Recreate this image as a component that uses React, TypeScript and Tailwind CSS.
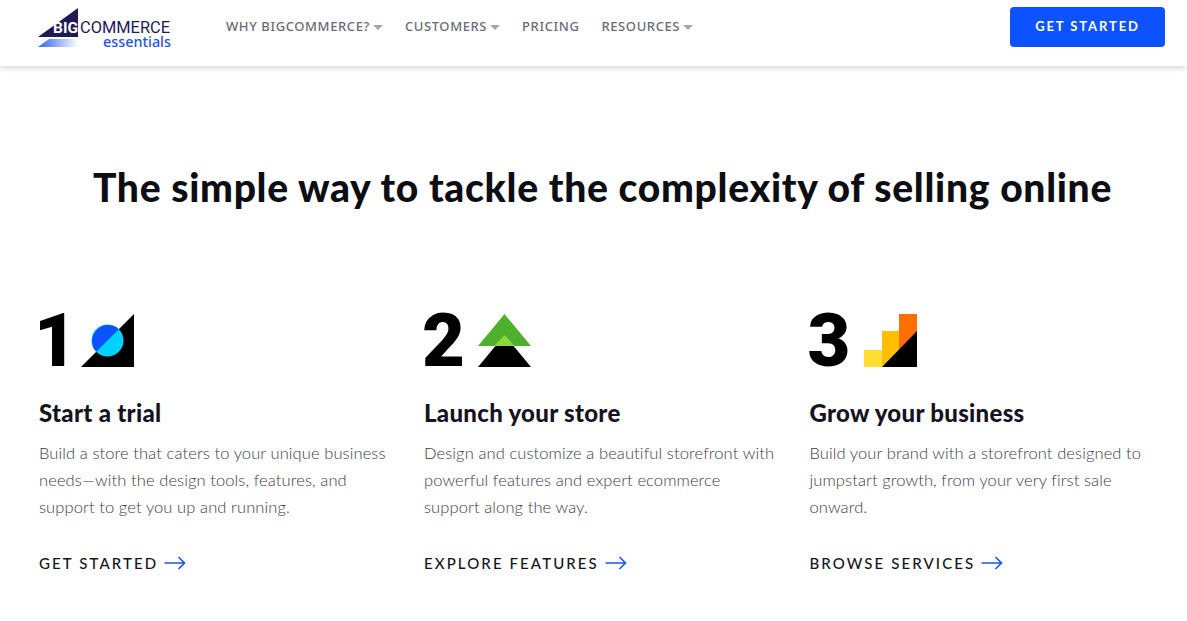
const NAV = [
  { label: "WHY BIGCOMMERCE?", caret: true },
  { label: "CUSTOMERS", caret: true },
  { label: "PRICING", caret: false },
  { label: "RESOURCES", caret: true },
];

function Logo() {
  return (
    <svg width="136" height="42" viewBox="0 0 136 42" className="block">
      <defs>
        <linearGradient id="logoFade" x1="0" x2="1" y1="0" y2="0">
          <stop offset="0" stopColor="#2f62ff" />
          <stop offset="1" stopColor="#ffffff" />
        </linearGradient>
      </defs>
      <path d="M1 29 L41 0 V29 Z" fill="#1f1a55" />
      <path d="M1 39 L12 31 H41 V39 Z" fill="url(#logoFade)" />
      <text x="16" y="25" fontFamily="Roboto, sans-serif" fontWeight="700" fontSize="15.5" fill="#ffffff">BIG</text>
      <text x="43" y="25" fontFamily="Roboto, sans-serif" fontWeight="400" fontSize="16.4" fill="#1f1a55">COMMERCE</text>
      <text x="134" y="39" textAnchor="end" fontFamily="'Noto Sans', sans-serif" fontWeight="500" fontSize="14.4" fill="#1f55e8">essentials</text>
    </svg>
  );
}

function Caret() {
  return <span className="ml-[3px] mt-[1px] h-0 w-0 border-x-[5px] border-t-[5px] border-x-transparent border-t-[#a5a5ad]" />;
}

function Arrow() {
  return (
    <svg width="22" height="14" viewBox="0 0 22 14" fill="none" stroke="#1a56f0" strokeWidth="1.6" className="ml-[6px]">
      <path d="M0.5 7 H20.5 M14.5 1 L20.5 7 L14.5 13" />
    </svg>
  );
}

function IconOne() {
  return (
    <svg width="54" height="54" viewBox="0 0 54 54">
      <path d="M0 53 L53 0 V53 Z" fill="#000000" />
      <circle cx="26.5" cy="26.5" r="16" fill="#00d2ff" />
      <path d="M15.2 37.8 A16 16 0 0 1 37.8 15.2 Z" fill="#0d52ff" />
    </svg>
  );
}

function IconTwo() {
  return (
    <svg width="54" height="54" viewBox="0 0 54 54">
      <path d="M0 53 L26.5 21 L53 53 Z" fill="#000000" />
      <path d="M0 32 L26.5 0 L53 32 Z" fill="#4fb02d" />
      <path d="M16 32 L26.5 21 L37 32 Z" fill="#8bd93d" />
    </svg>
  );
}

function IconThree() {
  return (
    <svg width="54" height="54" viewBox="0 0 54 54">
      <rect x="0" y="36" width="18" height="17" fill="#ffdf33" />
      <rect x="18" y="17" width="18" height="36" fill="#ffbe00" />
      <rect x="35" y="0" width="18" height="53" fill="#ff6f00" />
      <path d="M18 53 L53 17 V53 Z" fill="#000000" />
    </svg>
  );
}

const STEPS = [
  {
    num: "1",
    numClass: "w-[47px] -ml-[5px]",
    icon: <IconOne />,
    title: "Start a trial",
    body: ["Build a store that caters to your unique business", "needs—with the design tools, features, and", "support to get you up and running."],
    link: "GET STARTED",
  },
  {
    num: "2",
    numClass: "w-[56px] -ml-[2px]",
    icon: <IconTwo />,
    title: "Launch your store",
    body: ["Design and customize a beautiful storefront with", "powerful features and expert ecommerce", "support along the way."],
    link: "EXPLORE FEATURES",
  },
  {
    num: "3",
    numClass: "w-[56px] -ml-[2px]",
    icon: <IconThree />,
    title: "Grow your business",
    body: ["Build your brand with a storefront designed to", "jumpstart growth, from your very first sale", "onward."],
    link: "BROWSE SERVICES",
  },
];

export default function App() {
  return (
    <div className="h-[621px] w-[1187px] overflow-hidden bg-white font-['Lato',sans-serif]">
      <header className="flex h-[66px] items-start justify-between pl-[37px] pr-[22px] pt-[7px] shadow-[0_2px_6px_rgba(0,0,0,0.16)]">
        <div className="flex items-start">
          <div className="pt-[1px]">
            <Logo />
          </div>
          <nav className="ml-[53px] flex h-10 items-center gap-[22px] font-['Noto_Sans',sans-serif] text-[13px] font-medium tracking-[0.6px] text-[#6b6b76]">
            {NAV.map((item) => (
              <span key={item.label} className="flex items-center">
                {item.label}
                {item.caret && <Caret />}
              </span>
            ))}
          </nav>
        </div>
        <button type="button" className="h-10 w-[155px] rounded bg-[#0d52ff] text-[13px] font-bold tracking-[1.9px] text-white">
          GET STARTED
        </button>
      </header>

      <h1 className="mt-[97px] pl-[18px] text-center text-[39px] font-black leading-[48px] tracking-[0.7px] text-[#0d0d14]">
        The simple way to tackle the complexity of selling online
      </h1>

      <div className="mt-[103px] grid grid-cols-[385px_385.5px_1fr] pl-[39px]">
        {STEPS.map((step) => (
          <section key={step.num}>
            <div className="flex h-[54px] items-start">
              <span className={`${step.numClass} font-['Roboto',sans-serif] text-[74px] font-black leading-[53px] text-black`}>{step.num}</span>
              {step.icon}
            </div>
            <h2 className="mt-[29px] text-[24px] font-black leading-[32px] tracking-[0.3px] text-[#16131f]">{step.title}</h2>
            <p className="mt-[11px] text-[16.5px] font-light leading-[27px] tracking-[0.1px] text-[#3c3c45]">
              {step.body.map((line) => (
                <span key={line} className="block whitespace-nowrap">{line}</span>
              ))}
            </p>
            <a className="mt-[32px] flex items-center text-[15px] font-medium leading-[20px] tracking-[2.1px] text-[#14141c]">
              {step.link}
              <Arrow />
            </a>
          </section>
        ))}
      </div>
    </div>
  );
}
